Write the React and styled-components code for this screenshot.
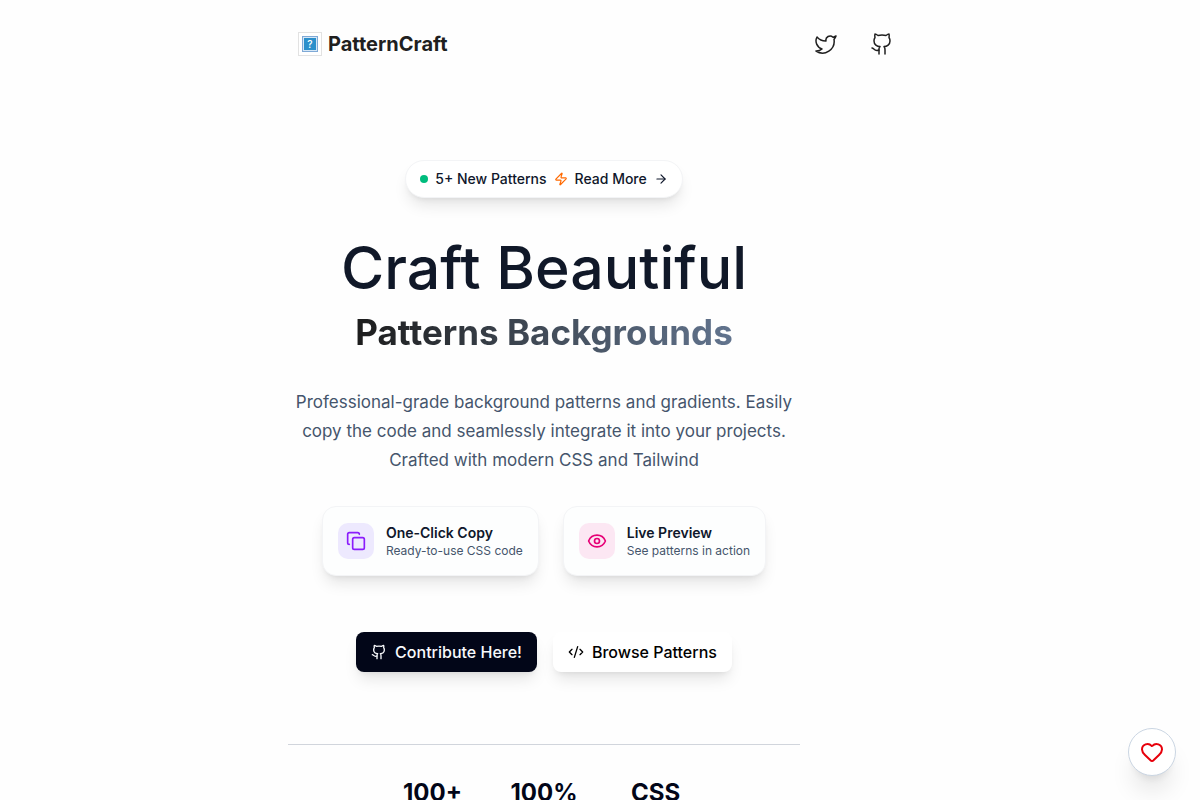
import React from 'react';
import styled, { createGlobalStyle } from 'styled-components';
import { Twitter, Github, Zap, ArrowRight, Copy, Eye, CodeXml, Heart } from 'lucide-react';

const GlobalStyle = createGlobalStyle`
  *, *::before, *::after { box-sizing: border-box; }
  body {
    margin: 0;
    background: #fefefe;
    color: #020618;
    font-family: Inter, "Liberation Sans", sans-serif;
    -webkit-font-smoothing: antialiased;
  }
  h1, h2, p { margin: 0; }
  a { color: inherit; text-decoration: none; }
`;

const liftShadow = '0 10px 15px -3px rgba(0, 0, 0, 0.1), 0 4px 6px -4px rgba(0, 0, 0, 0.1)';

const Page = styled.div`
  width: 100%;
  max-width: 624px;
  margin: 0 auto;
`;

const Header = styled.header`
  display: flex;
  align-items: center;
  justify-content: space-between;
  padding: 24px 10px;
`;

const Brand = styled.a`
  display: flex;
  align-items: center;
  gap: 6px;
  color: #1f1f1f;
  font-size: 20px;
  line-height: 28px;
  font-weight: 700;
`;

const Social = styled.nav`
  display: flex;
  gap: 16px;
`;

const IconLink = styled.a`
  display: flex;
  align-items: center;
  justify-content: center;
  width: 40px;
  height: 40px;
  color: #1f1f1f;
`;

const Hero = styled.main`
  display: flex;
  flex-direction: column;
  align-items: center;
  max-width: 512px;
  padding-top: 72px;
  text-align: center;
`;

const Announcement = styled.a`
  display: flex;
  align-items: center;
  gap: 7px;
  height: 38px;
  padding: 0 14px;
  border: 1px solid #f3f4f6;
  border-radius: 19px;
  background: #ffffff;
  box-shadow: ${liftShadow};
  color: #0f172b;
  font-size: 14px;
  line-height: 20px;
  font-weight: 500;
`;

const Dot = styled.span`
  width: 8px;
  height: 8px;
  border-radius: 50%;
  background: #00bc7d;
`;

const Title = styled.h1`
  margin-top: 40px;
  color: #101828;
  font-size: 59px;
  line-height: 60px;
  font-weight: 500;
  white-space: nowrap;
`;

const Subtitle = styled.h2`
  margin-top: 12px;
  padding-bottom: 4px;
  background: linear-gradient(90deg, #1c1c1c, #45505e 55%, #62748e);
  background-clip: text;
  color: transparent;
  font-size: 35px;
  line-height: 44px;
  font-weight: 700;
  white-space: nowrap;
`;

const Lead = styled.p`
  margin-top: 30px;
  color: #45556c;
  font-size: 17px;
  line-height: 29px;
`;

const Features = styled.section`
  display: flex;
  gap: 24px;
  margin-top: 31px;
`;

const Feature = styled.article`
  display: flex;
  align-items: center;
  gap: 12px;
  padding: 16px 15px;
  border: 1px solid #f3f4f6;
  border-radius: 14px;
  background: #fdfefe;
  box-shadow: ${liftShadow};
  text-align: left;
`;

const FeatureIcon = styled.div`
  display: flex;
  align-items: center;
  justify-content: center;
  width: 36px;
  height: 36px;
  border-radius: 10px;
  background: ${(p) => p.$bg};
  color: ${(p) => p.$fg};
`;

const FeatureName = styled.p`
  color: #0f172b;
  font-size: 14px;
  line-height: 20px;
  font-weight: 600;
`;

const FeatureNote = styled.p`
  color: #45556c;
  font-size: 12px;
  line-height: 16px;
`;

const Actions = styled.div`
  display: flex;
  gap: 16px;
  margin-top: 56px;
`;

const Action = styled.button`
  display: flex;
  align-items: center;
  gap: 8px;
  height: 40px;
  padding: 0 15px;
  border: 0;
  border-radius: 8px;
  background: ${(p) => (p.$primary ? '#020618' : '#ffffff')};
  color: ${(p) => (p.$primary ? '#f8fafc' : '#000000')};
  box-shadow: ${liftShadow};
  font-family: inherit;
  font-size: 16px;
  line-height: 24px;
  font-weight: 500;
  cursor: pointer;
`;

const Stats = styled.section`
  display: flex;
  justify-content: center;
  gap: 48px;
  align-self: stretch;
  margin-top: 72px;
  padding: 32px 0;
  border-top: 1px solid #d1d5dc;
`;

const Stat = styled.div`
  min-width: 60px;
  font-size: 24px;
  line-height: 32px;
  font-weight: 700;
`;

const FavoriteButton = styled.button`
  position: fixed;
  right: 24px;
  bottom: 24px;
  display: flex;
  align-items: center;
  justify-content: center;
  width: 48px;
  height: 48px;
  padding: 0;
  border: 1px solid #cad5e2;
  border-radius: 50%;
  background: #ffffff;
  box-shadow: 0 20px 25px -5px rgba(0, 0, 0, 0.1), 0 8px 10px -6px rgba(0, 0, 0, 0.1);
  color: #e7000b;
  cursor: pointer;
`;

const LogoText = styled.text`
  font-size: 10px;
  font-weight: 500;
`;

function Logo() {
  return (
    <svg width="24" height="24" viewBox="0 0 24 24" aria-hidden="true">
      <rect x="0.5" y="0.5" width="23" height="23" fill="#fff" stroke="#e2e2e2" />
      <rect x="4.5" y="4.5" width="15" height="15" fill="#d5e7f6" stroke="#7fa9d6" />
      <rect x="6" y="6" width="12" height="12" fill="#2a8fcb" />
      <LogoText x="12" y="15.5" textAnchor="middle" fill="#fff">?</LogoText>
    </svg>
  );
}

const features = [
  { name: 'One-Click Copy', note: 'Ready-to-use CSS code', Icon: Copy, bg: '#ede9fe', fg: '#8b1cfc' },
  { name: 'Live Preview', note: 'See patterns in action', Icon: Eye, bg: '#fce7f3', fg: '#e60076' },
];

const stats = ['100+', '100%', 'CSS'];

export default function App() {
  return (
    <>
      <GlobalStyle />
      <Page>
        <Header>
          <Brand href="#"><Logo />PatternCraft</Brand>
          <Social>
            <IconLink href="#" aria-label="Twitter"><Twitter size={24} strokeWidth={1.5} /></IconLink>
            <IconLink href="#" aria-label="GitHub"><Github size={24} strokeWidth={1.5} /></IconLink>
          </Social>
        </Header>
        <Hero>
          <Announcement href="#">
            <Dot />
            <span>5+ New Patterns</span>
            <Zap size={14} color="#ff6900" />
            <span>Read More</span>
            <ArrowRight size={14} />
          </Announcement>
          <Title>Craft Beautiful</Title>
          <Subtitle>Patterns Backgrounds</Subtitle>
          <Lead>
            Professional-grade background patterns and gradients. Easily copy the code and seamlessly
            integrate it into your projects. Crafted with modern CSS and Tailwind
          </Lead>
          <Features>
            {features.map(({ name, note, Icon, bg, fg }) => (
              <Feature key={name}>
                <FeatureIcon $bg={bg} $fg={fg}><Icon size={20} /></FeatureIcon>
                <div>
                  <FeatureName>{name}</FeatureName>
                  <FeatureNote>{note}</FeatureNote>
                </div>
              </Feature>
            ))}
          </Features>
          <Actions>
            <Action type="button" $primary><Github size={16} />Contribute Here!</Action>
            <Action type="button"><CodeXml size={16} />Browse Patterns</Action>
          </Actions>
          <Stats>
            {stats.map((value) => <Stat key={value}>{value}</Stat>)}
          </Stats>
        </Hero>
      </Page>
      <FavoriteButton type="button" aria-label="Favorite"><Heart size={24} /></FavoriteButton>
    </>
  );
}
